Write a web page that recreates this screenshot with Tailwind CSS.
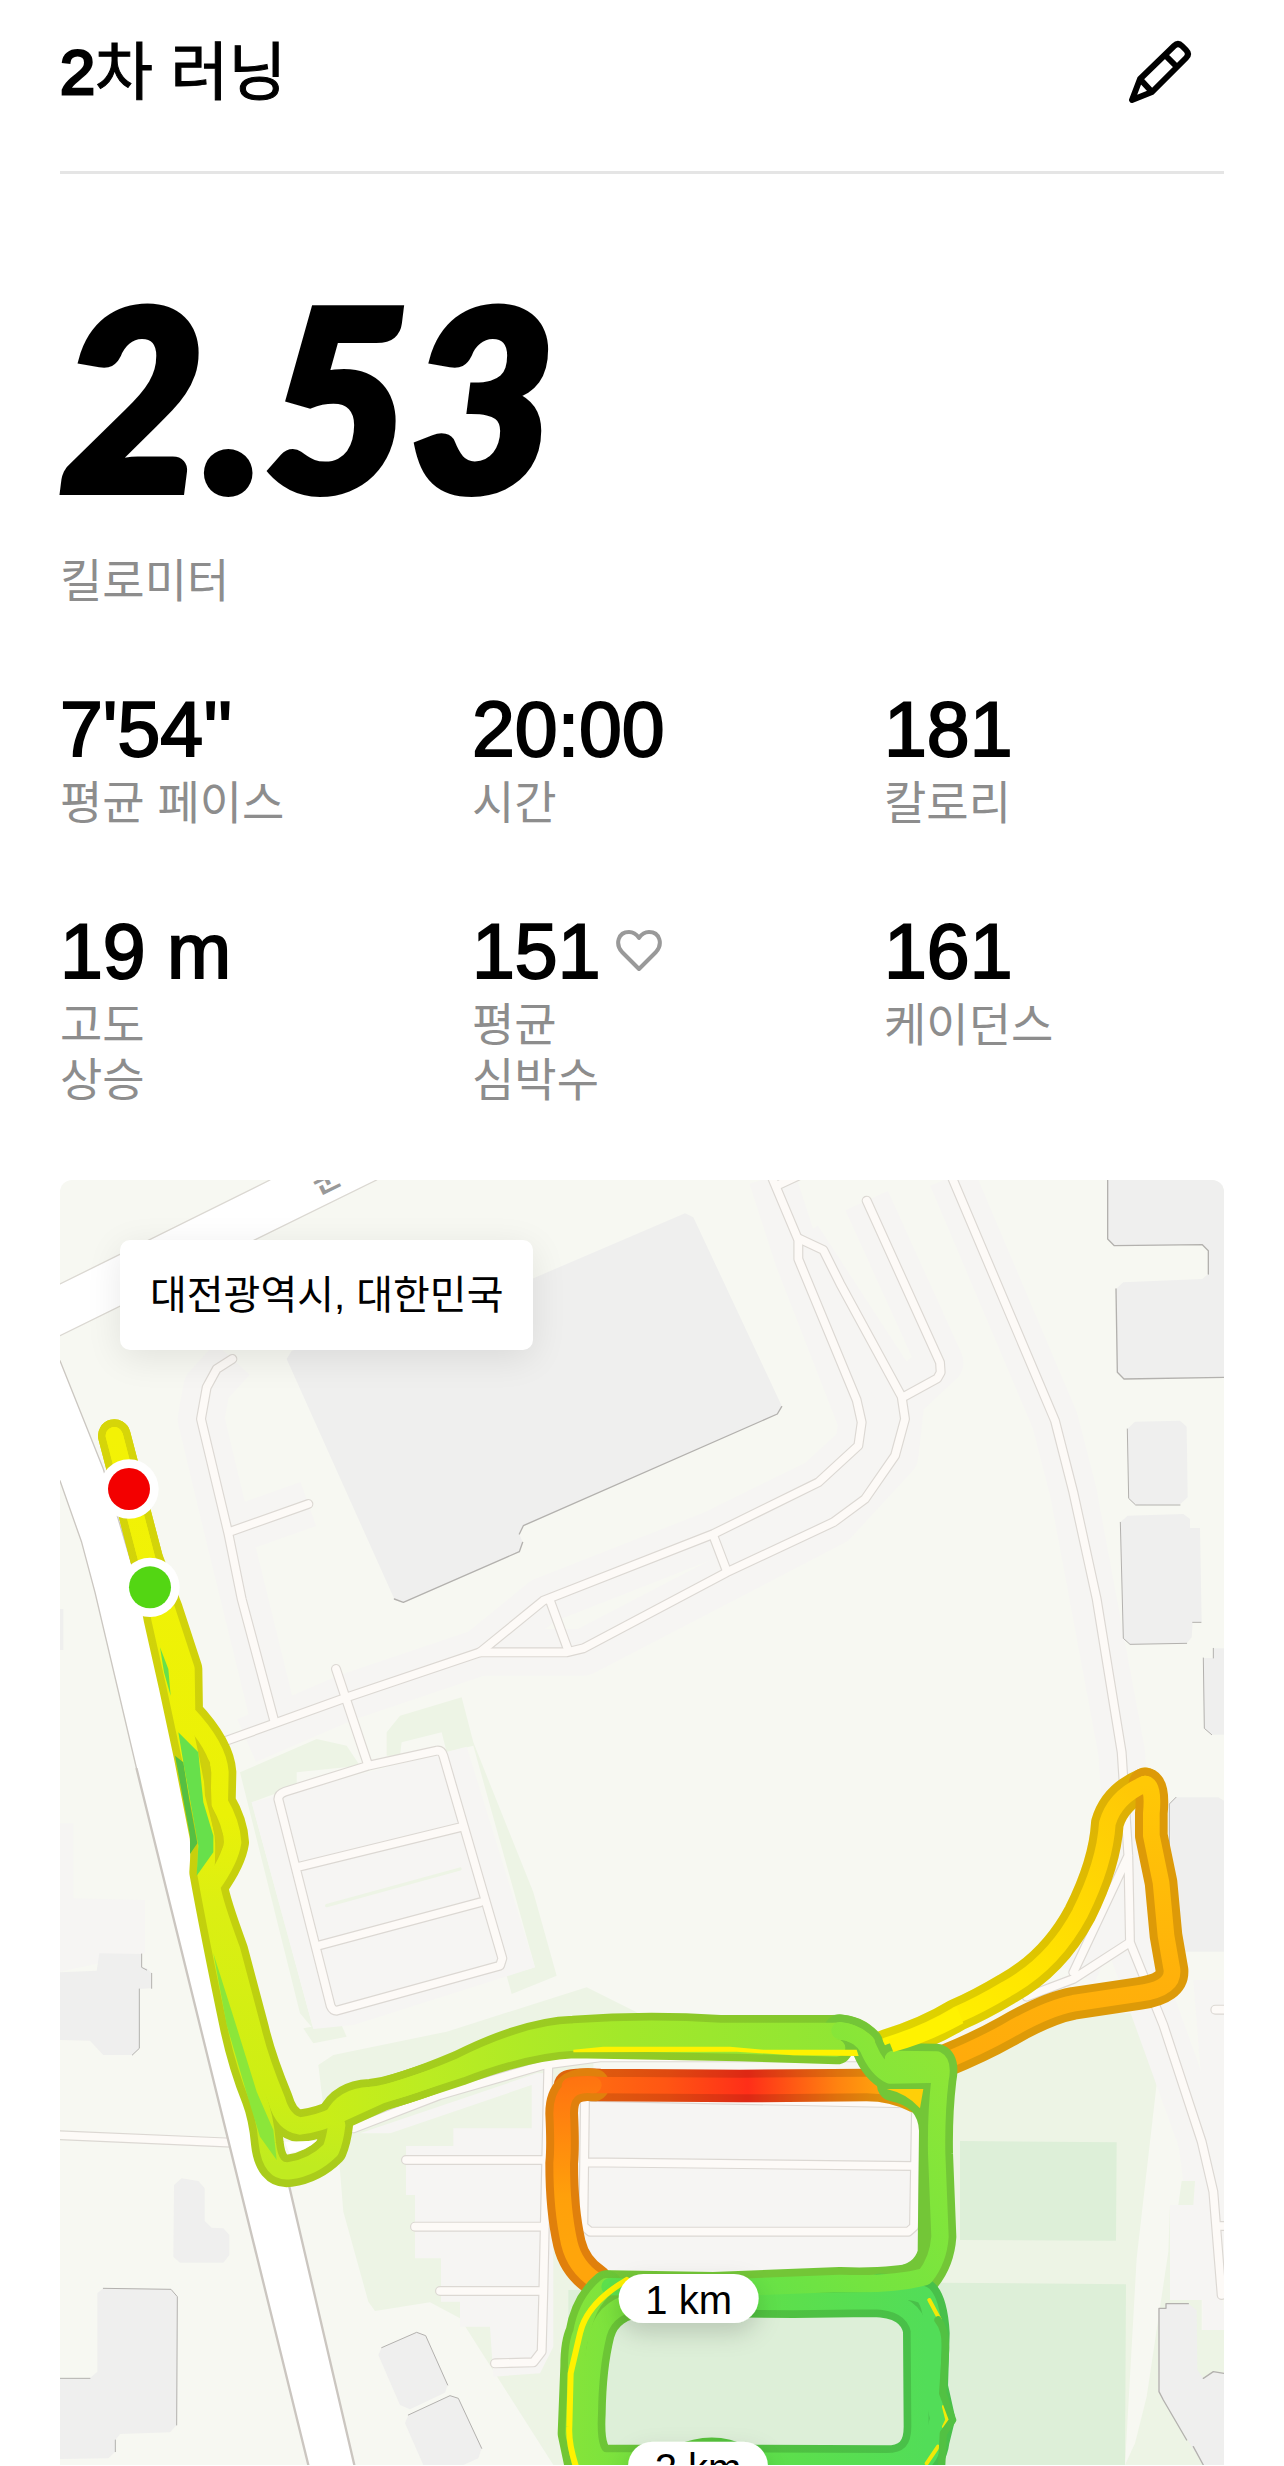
<!DOCTYPE html>
<html lang="ko">
<head>
<meta charset="utf-8">
<meta name="viewport" content="width=device-width, initial-scale=1">
<title>2차 러닝</title>
<script src="https://cdn.jsdelivr.net/npm/@tailwindcss/browser@4"></script>
</head>
<body class="bg-white text-black font-['Liberation_Sans','Noto_Sans_CJK_KR',sans-serif]">
<main class="px-[60px] overflow-hidden">
  <header class="flex items-center justify-between h-[174px] pb-7 border-b-[3px] border-[#e5e5e5]">
    <h1 class="text-[63px] leading-[96px] [-webkit-text-stroke:1px_black]"><span class="[-webkit-text-stroke:3px_black]">2</span>차 러닝</h1>
    <button type="button" aria-label="이름 편집" class="mr-8">
      <svg class="size-16" viewBox="0 0 64 64" fill="none" stroke="black" stroke-width="6" stroke-linejoin="round"><path d="M4 60 L12 39 L46 6 Q50 2 54 6 L58 10 Q62 14 58 18 L24 52 Z M37 15 L50 28 M12 39 L24 52"/></svg>
    </button>
  </header>

  <section class="pt-[112px]">
    <p class="font-['Lato',sans-serif] font-black italic text-[250px] leading-[216px] [-webkit-text-stroke:8px_black]">2.53</p>
    <p class="mt-[52px] text-[46px] leading-[55px] text-[#8d8d8d]">킬로미터</p>
  </section>

  <dl class="mt-[78px] grid grid-cols-[412px_412px_1fr] gap-y-[78px] text-[46px] leading-[55px] text-[#8d8d8d]">
    <div class="flex flex-col-reverse justify-end gap-[5px]"><dt>평균 페이스</dt><dd class="text-[77px] leading-[84px] text-black [-webkit-text-stroke:2px_black]">7'54''</dd></div>
    <div class="flex flex-col-reverse justify-end gap-[5px]"><dt>시간</dt><dd class="text-[77px] leading-[84px] text-black [-webkit-text-stroke:2px_black]">20:00</dd></div>
    <div class="flex flex-col-reverse justify-end gap-[5px]"><dt>칼로리</dt><dd class="text-[77px] leading-[84px] text-black [-webkit-text-stroke:2px_black]">181</dd></div>
    <div class="flex flex-col-reverse justify-end gap-[5px]"><dt>고도<br>상승</dt><dd class="text-[77px] leading-[84px] text-black [-webkit-text-stroke:2px_black]">19 m</dd></div>
    <div class="flex flex-col-reverse justify-end gap-[5px]"><dt>평균<br>심박수</dt><dd class="flex items-center gap-4 text-[77px] leading-[84px] text-black [-webkit-text-stroke:2px_black]">151
      <svg class="w-[46px] h-[44px]" viewBox="0 0 46 44" fill="none" stroke="#999" stroke-width="4" stroke-linejoin="round" aria-hidden="true"><path d="M23 40 L6 23 C-1 15 2 3 13 3 C18 3 21 6 23 9 C25 6 28 3 33 3 C44 3 47 15 40 23 Z"/></svg></dd></div>
    <div class="flex flex-col-reverse justify-end gap-[5px]"><dt>케이던스</dt><dd class="text-[77px] leading-[84px] text-black [-webkit-text-stroke:2px_black]">161</dd></div>
  </dl>

  <section aria-label="경로 지도" class="relative mt-[72px] overflow-hidden rounded-t-xl bg-[#f7f8f2]">
    <p class="absolute left-[60px] top-[60px] rounded-[10px] bg-white px-[30px] text-[40px] leading-[110px] shadow-[0_8px_36px_rgba(0,0,0,0.09)]">대전광역시, 대한민국</p>
    <svg class="block w-full h-auto" viewBox="0 0 3492 3855" fill="none" stroke-linecap="round" stroke-linejoin="round">
      <defs>
        <linearGradient id="west" gradientUnits="userSpaceOnUse" x1="0" y1="767" x2="0" y2="2960"><stop offset="0" stop-color="#f3f205"/><stop offset=".52" stop-color="#eaf107"/><stop offset=".64" stop-color="#dcef12"/><stop offset=".9" stop-color="#cdee14"/><stop offset="1" stop-color="#c0eb20"/></linearGradient>
        <linearGradient id="west-edge" gradientUnits="userSpaceOnUse" x1="0" y1="767" x2="0" y2="2960"><stop offset="0" stop-color="#d6d509"/><stop offset=".5" stop-color="#ccd00b"/><stop offset=".75" stop-color="#bed00f"/><stop offset="1" stop-color="#aacc1b"/></linearGradient>
        <linearGradient id="mid" gradientUnits="userSpaceOnUse" x1="700" y1="0" x2="2700" y2="0"><stop offset="0" stop-color="#cdee14"/><stop offset=".2" stop-color="#bbec22"/><stop offset=".5" stop-color="#a2e82a"/><stop offset="1" stop-color="#86e43a"/></linearGradient>
        <linearGradient id="mid-edge" gradientUnits="userSpaceOnUse" x1="700" y1="0" x2="2700" y2="0"><stop offset="0" stop-color="#b0cf18"/><stop offset=".4" stop-color="#99cb22"/><stop offset="1" stop-color="#74c634"/></linearGradient>
        <linearGradient id="up" gradientUnits="userSpaceOnUse" x1="2500" y1="2580" x2="3200" y2="1820"><stop offset="0" stop-color="#fff500"/><stop offset=".4" stop-color="#ffe600"/><stop offset="1" stop-color="#ffc806"/></linearGradient>
        <linearGradient id="down" gradientUnits="userSpaceOnUse" x1="0" y1="1812" x2="0" y2="2640"><stop offset="0" stop-color="#ffc806"/><stop offset=".7" stop-color="#ffb10a"/><stop offset="1" stop-color="#ffab0b"/></linearGradient>
        <linearGradient id="red" gradientUnits="userSpaceOnUse" x1="1505" y1="0" x2="2540" y2="0"><stop offset="0" stop-color="#ff7410"/><stop offset=".3" stop-color="#ff5613"/><stop offset=".54" stop-color="#ff2e18"/><stop offset=".8" stop-color="#ff8310"/><stop offset="1" stop-color="#ffb50a"/></linearGradient>
        <linearGradient id="orange" gradientUnits="userSpaceOnUse" x1="0" y1="2700" x2="0" y2="3200"><stop offset="0" stop-color="#ff7410"/><stop offset=".7" stop-color="#ffa00b"/><stop offset="1" stop-color="#ffa50b"/></linearGradient>
        <linearGradient id="loop" gradientUnits="userSpaceOnUse" x1="1550" y1="0" x2="2600" y2="0"><stop offset="0" stop-color="#84e43a"/><stop offset=".45" stop-color="#60e048"/><stop offset="1" stop-color="#52dd58"/></linearGradient>
        <linearGradient id="loop-edge" gradientUnits="userSpaceOnUse" x1="1550" y1="0" x2="2600" y2="0"><stop offset="0" stop-color="#72c634"/><stop offset=".45" stop-color="#52c13e"/><stop offset="1" stop-color="#48c04a"/></linearGradient>
        <linearGradient id="east" gradientUnits="userSpaceOnUse" x1="2660" y1="2650" x2="1900" y2="3400"><stop offset="0" stop-color="#8ee636"/><stop offset=".6" stop-color="#74e440"/><stop offset="1" stop-color="#5ce04c"/></linearGradient>
        <filter id="pill" x="-40%" y="-40%" width="180%" height="220%"><feDropShadow dx="0" dy="30" stdDeviation="36" flood-opacity=".16"/></filter>
        <g id="streets">
          <path d="M517 537 L470 567 L440 622 L423 717 L505 1060 L545 1257 L642 1620 M745 972 L505 1057"/>
          <path d="M500 1682 L860 1552 L1260 1417 L1450 1262 L1960 1062 L2275 907 L2395 797 L2405 727 L2390 660 L2215 237 L2215 180 L2135 -10"/>
          <path d="M1260 1417 H1520 L1570 1405 L2000 1177 L2320 1027 L2415 957 L2505 827 L2535 717 L2525 650 L2340 310 L2290 210 L2215 175 M2150 17 L2230 -20"/>
          <path d="M1470 1262 L1525 1412 M1960 1067 L2000 1172 M2420 62 L2640 547 L2642 577 L2632 595 L2528 652"/>
          <path d="M2675 -10 L2985 722 L3040 937 L3110 1257 L3185 1717 L3205 2027 L3210 2287 L3310 2535 L3425 2885 L3460 3035 L3485 3345 M3210 2287 L3040 2397 L2900 2450 M3205 2027 L3040 2377 M3466 2489 H3520 M3470 3138 H3520"/>
          <path d="M828 1467 L925 1757 M655 1857 Q655 1842 675 1835 L925 1757 L1130 1712 Q1145 1710 1150 1727 L1327 2335 L1320 2357 L830 2492 Q818 2492 812 2478 Z M710 2062 L1200 1942 M775 2297 L1260 2167"/>
          <path d="M-20 2865 L515 2888"/>
          <path d="M880 2845 L1140 2745 L1450 2655 L1620 2632 H2440 M1465 2655 L1450 3335 L1445 3515 L1420 3547 L1305 3550 M1038 2940 H1455 M1065 3140 H1455 M1140 3333 H1450"/>
          <path d="M1575 2750 L2540 2770 L2568 2790 L2562 3140 L2545 3155 H1590 L1570 3138 Z M1575 2947 L2560 2958"/>
        </g>
        <g id="halo">
          <path d="M517 537 L440 622 L423 717 L505 1060 L642 1620 M745 972 L505 1057"/>
          <path d="M560 1682 L860 1552 L1260 1417 L1450 1262 L1960 1062 L2275 907 L2395 797 L2405 727 L2215 237 L2135 -10"/>
          <path d="M1260 1417 H1570 L2320 1027 L2505 827 L2525 650 L2215 175 M2420 62 L2640 547 L2528 652"/>
          <path d="M2675 -10 L2985 722 L3040 937 L3185 1717 L3205 2027 L3210 2287 L3425 2885 L3485 3345 M3205 2027 L3040 2377"/>
        </g>
        <path id="t-west1" d="M163 767 L260 1137 Q285 1230 300 1317 L345 1517 L390 1727 L438 1970 Q442 2010 437 2077 Q470 2260 530 2547 Q555 2660 592 2750 Q615 2810 622 2890 Q632 2980 690 2972 Q760 2962 812 2910 Q825 2880 830 2835"/>
        <path id="t-west2" d="M163 767 L260 1137 L320 1290 L378 1467 L380 1600 Q475 1700 480 1777 L478 1867 Q515 1930 518 1987 Q510 2040 455 2117 Q460 2160 515 2310 L578 2547 Q600 2640 650 2760 Q670 2830 720 2838 Q780 2830 830 2805"/>
        <path id="t-mid1" d="M820 2810 Q850 2750 930 2746 Q1010 2740 1200 2660 Q1400 2560 1540 2556 Q1760 2540 1980 2554 H2320 Q2380 2548 2420 2590"/>
        <path id="t-mid2" d="M820 2810 L960 2746 L1040 2720 L1200 2668 Q1400 2592 1540 2586 L2040 2595 L2330 2604"/>
        <path id="t-up" d="M2480 2597 Q2600 2560 2690 2505 Q2760 2475 2840 2427 Q2980 2350 3060 2200 Q3135 2050 3142 1930 Q3165 1850 3255 1812"/>
        <path id="t-down" d="M3255 1812 Q3282 1815 3274 1900 L3274 1967 L3303 2107 L3318 2267 L3336 2370 Q3340 2425 3240 2440 L3040 2470 Q2960 2485 2840 2555 Q2760 2600 2650 2645"/>
        <path id="t-red" d="M2570 2750 Q2500 2715 2420 2715 L2040 2718 L1620 2715 Q1560 2712 1530 2718"/>
        <path id="t-orange" d="M1600 2715 Q1505 2705 1505 2800 Q1510 2900 1505 2950 Q1505 3090 1528 3190 Q1545 3260 1605 3300"/>
        <path id="t-east" d="M2340 2552 Q2400 2560 2425 2605 Q2450 2665 2490 2685 L2640 2682 M2500 2638 L2630 2640 Q2650 2650 2640 2700 Q2628 2800 2630 2920 L2640 3170 Q2635 3240 2595 3290 Q2500 3316 2340 3310 L1960 3325 L1650 3320"/>
        <path id="t-east2" d="M2500 2715 Q2620 2740 2626 2850 L2622 3220 Q2600 3300 2500 3310"/>
        <path id="t-loop1" d="M1640 3320 Q1580 3370 1565 3460 Q1550 3490 1550 3560 L1542 3760 L1560 3845 Q1600 3880 1700 3860 L2540 3860 Q2610 3860 2620 3780 L2636 3715 L2615 3620 L2620 3460 Q2615 3370 2590 3345 Q2560 3330 2460 3330"/>
        <path id="t-loop2" d="M1760 3360 Q1640 3370 1615 3460 Q1590 3560 1588 3700 Q1580 3845 1640 3843 L1860 3843 Q1960 3800 2040 3843 L2480 3845 Q2580 3845 2580 3740 L2578 3450 Q2560 3365 2440 3362 L2200 3365 Z"/>
      </defs>

      <!-- lawns and sports fields -->
      <g fill="#edf4e5">
        <path d="M540 1777 L770 1677 L860 1697 L900 1757 L710 1777 V1817 L575 1867 L760 2547 L720 2500 Z"/>
        <path d="M980 1727 V1657 L1020 1607 L1205 1552 L1240 1687 L1420 2137 L1490 2387 L1355 2442 L1340 2387 L1425 2362 L1240 1697 L1160 1717 L1145 1657 L1025 1687 L1020 1727 Z"/>
        <path d="M730 2545 L840 2525 L860 2570 L760 2590 Z"/>
        <path d="M775 2655 L820 2625 L1160 2555 L1580 2422 L1730 2497 L1700 2640 H1600 V3855 H1480 L1200 3415 L1110 3367 L945 3393 L925 3365 L850 3095 L830 2850 L790 2780 Z"/>
        <path d="M2560 2600 L2700 2660 L3000 2500 L3240 2500 L3300 2625 L3270 2885 L3230 3235 L3195 3855 H1500 L1520 3300 L2600 3250 Z"/>
        <path d="M3330 3075 V3360 H3425 V3450 H3492 V3855 H3195 L3225 3790 L3260 3650 L3325 3215 Z"/>
      </g>
      <path fill="#ddefd8" d="M2700 2883 L3170 2887 L3168 3182 L2700 3180 Z M1525 3330 L2640 3308 L3198 3313 L3195 3855 H1525 Z"/>

      <!-- paved ground -->
      <use href="#halo" stroke="#f6f5f3" stroke-width="140" stroke-linecap="butt"/>
      <g fill="#f6f5f3">
        <path d="M575 1867 L1220 1700 L1425 2362 L880 2535 L760 2547 Z"/>
        <path d="M900 2860 L1430 2680 H1480 V3500 L1440 3580 L1300 3590 L1290 3440 H1200 V3365 H1143 V3235 H1065 V3045 H1038 V2860 Z"/>
        <path d="M1550 2730 H2600 V3270 H1550 Z M0 1930 H40 V2155 L255 2160 V2320 L0 2375 Z"/>
        <path d="M3330 3075 H3450 L3492 3400 V3450 H3428 V3360 H3330 Z M3400 2400 H3492 V3138 L3440 2900 Z"/>
      </g>
      <path fill="#edf4e5" d="M960 2870 L1415 2715 V2845 H1180 V2898 H960 Z M3365 3003 H3405 L3400 3075 H3355 Z"/>
      <path d="M800 2177 L1200 2067" stroke="#edf4e5" stroke-width="10"/>

      <!-- buildings -->
      <g fill="#efefee">
        <path d="M1875 100 L1900 112 L2165 677 L2152 702 L1390 1037 L1378 1062 L1388 1087 L1378 1115 L1030 1267 L1003 1257 L680 537 L695 512 L1415 297 Z"/>
        <path d="M3143 0 V177 L3163 197 L3427 194 L3445 212 V282 L3427 297 L3190 307 L3168 327 L3172 577 L3192 597 L3492 592 V0 Z"/>
        <path d="M3202 747 L3225 725 L3360 722 L3380 740 L3383 952 L3360 973 L3227 975 L3206 955 Z"/>
        <path d="M3181 1027 L3203 1007 L3370 1002 L3390 1017 V1044 H3420 L3425 1327 H3398 L3395 1372 L3380 1390 L3210 1393 L3190 1375 Z"/>
        <path d="M3430 1434 H3460 V1405 H3492 V1664 H3455 L3433 1645 Z M3328 1872 L3348 1852 H3475 L3492 1862 V2315 H3340 Z"/>
        <path d="M0 1287 H10 V1410 H0 Z M0 2377 L110 2372 L118 2320 L245 2322 V2362 L260 2365 L275 2380 V2425 L238 2427 V2605 L217 2625 H130 L90 2582 L0 2580 Z"/>
        <path d="M342 3015 L365 2995 L415 3003 L434 3025 V3123 L455 3143 L490 3145 L508 3165 V3225 L490 3248 H360 L340 3230 Z"/>
        <path d="M130 3325 L333 3328 L352 3350 L350 3735 L330 3757 L180 3762 L166 3780 V3815 L145 3835 L0 3837 V3595 H90 L112 3575 V3340 Z"/>
        <path d="M955 3525 L965 3503 L1070 3457 L1097 3467 L1163 3615 L1155 3638 L1050 3688 L1020 3675 Z M1035 3730 L1045 3705 L1170 3647 L1195 3655 L1265 3805 L1255 3835 L1210 3855 H1090 Z"/>
        <path d="M3295 3385 H3318 V3371 H3385 L3410 3390 L3412 3570 L3430 3595 L3460 3575 L3492 3580 V3855 H3430 L3398 3805 L3295 3635 Z"/>
      </g>
      <g stroke="#b3b1ae" stroke-width="4">
        <path d="M2165 680 L2152 702 L1390 1037 L1378 1062 M1388 1087 L1378 1115 L1030 1267 L1003 1257"/>
        <path d="M3143 0 V177 L3163 197 L3427 194 L3445 212 V282 M3168 327 L3172 577 L3192 597 L3492 592"/>
        <path d="M3202 747 L3206 955 L3227 975 H3360 M3181 1027 L3190 1375 L3210 1393 L3380 1390 M3398 1327 H3423 M3460 1405 V1434 M3430 1434 L3433 1645 L3455 1664 M3328 2050 V1872 L3348 1852" stroke-width="3"/>
        <path d="M245 2322 V2362 L260 2370 M275 2380 V2425 M238 2427 V2605 L217 2625 M130 3325 L333 3328 L352 3350 L350 3735 M166 3780 V3815 M0 3595 H90 M965 3503 L1070 3457 L1097 3467 L1163 3615 M1045 3705 L1170 3647 L1195 3655 L1265 3805" stroke-width="3"/>
        <path d="M3385 3371 H3318 V3385 H3297 V3635 L3310 3660 L3380 3780 M3400 3800 L3430 3855 M3430 3595 L3460 3575 L3492 3580"/>
      </g>

      <!-- streets -->
      <use href="#streets" stroke="#dcd8d3" stroke-width="30"/>
      <use href="#streets" stroke="#fdfaf7" stroke-width="23"/>
      <path fill="#fff" d="M0 312 L630 0 H950 L0 467 Z M0 902 L65 1087 L105 1237 L230 1767 L745 3855 H883 L688 3020 L215 1152 L130 867 L0 542 Z"/>
      <path stroke="#dbd8d2" stroke-width="4" d="M0 312 L630 0 M950 0 L0 467"/>
      <path stroke="#cbc7c1" stroke-width="4" d="M0 542 L130 867 L215 1152 L688 3020 M0 902 L65 1087 L105 1237 L230 1767"/>
      <path stroke="#cbc6c0" stroke-width="7" d="M230 1767 L745 3855 M688 3020 L883 3855"/>
      <text x="0" y="0" transform="translate(775 44) rotate(-26)" font-size="92" font-weight="700" fill="#999" stroke="none">군</text>

      <!-- run track: casing first, coloured core above it -->
      <g stroke-width="98">
        <use href="#t-up" stroke="url(#up)"/><use href="#t-up" stroke="#000" stroke-opacity=".13"/>
        <use href="#t-down" stroke="#dd9a08"/>
        <use href="#t-up" stroke="url(#up)" stroke-width="50"/>
        <use href="#t-down" stroke="url(#down)" stroke-width="50"/>
      </g>
      <g stroke-width="98">
        <use href="#t-red" stroke="url(#red)"/><use href="#t-red" stroke="#000" stroke-opacity=".13"/>
        <use href="#t-orange" stroke="#e0800c"/>
        <use href="#t-red" stroke="url(#red)" stroke-width="50"/>
        <use href="#t-orange" stroke="url(#orange)" stroke-width="50"/>
      </g>
      <g stroke-width="98">
        <use href="#t-west1" stroke="url(#west-edge)"/><use href="#t-west2" stroke="url(#west-edge)"/>
        <use href="#t-mid2" stroke="url(#mid-edge)"/><use href="#t-mid1" stroke="url(#mid-edge)"/>
        <use href="#t-east" stroke="#73c637"/><use href="#t-east2" stroke="#73c637"/>
        <use href="#t-loop1" stroke="url(#loop-edge)"/><use href="#t-loop2" stroke="url(#loop-edge)"/>
      </g>
      <g stroke-width="52">
        <use href="#t-west1" stroke="url(#west)"/><use href="#t-west2" stroke="url(#west)"/>
        <use href="#t-mid2" stroke="url(#mid)"/><use href="#t-mid1" stroke="url(#mid)"/>
        <use href="#t-loop1" stroke="url(#loop)"/><use href="#t-loop2" stroke="url(#loop)"/>
        <use href="#t-east" stroke="url(#east)"/>
      </g>
      <path fill="#ffcf08" d="M2480 2727 H2590 L2580 2785 Q2540 2740 2480 2727 Z"/>
      <path fill="#fff200" d="M2485 2578 L2560 2550 L2690 2480 L2710 2530 Q2600 2590 2500 2616 Z M1540 2609 L1630 2600 H2010 L2110 2609 H2390 L2396 2628 L2200 2626 L2030 2615 L1540 2617 Z"/>
      <path stroke="#fff200" stroke-width="18" d="M1700 3300 Q1580 3370 1560 3460 L1532 3580 L1528 3740 Q1525 3790 1548 3860"/>
      <path stroke="#f2e808" stroke-width="12" d="M2608 3360 L2640 3420 M2652 3680 L2662 3720 L2652 3740 M2634 3800 L2600 3850"/>
      <path stroke="#52c143" stroke-width="22" d="M2634 3420 Q2660 3450 2656 3520 L2648 3640 L2678 3720 L2650 3760 L2645 3855"/>
      <g>
        <path fill="#67e04b" d="M355 1657 L415 1717 L430 1867 L460 1967 V2017 L410 2087 L415 1997 L370 1747 Z M300 1402 L325 1467 L332 1547 L312 1477 Z"/>
        <path fill="#55bf42" d="M345 1727 L370 1747 L388 1860 L412 1990 L390 2022 V1967 Z"/>
        <path fill="#cfd00c" d="M415 1692 L450 1747 L455 1877 L490 1967 V1997 L465 2047 L470 1987 L435 1847 L430 1767 Z"/>
        <path fill="#8be63a" d="M460 2320 L528 2535 L590 2735 L640 2850 L650 2940 L600 2870 L560 2740 L500 2535 Z"/>
      </g>
      <path fill="#fff" d="M675 2885 L770 2882 Q740 2910 688 2920 Z"/>

      <!-- start, finish and distance markers -->
      <circle cx="270" cy="1222" r="89" fill="#fff"/><circle cx="270" cy="1222" r="63" fill="#53d613"/>
      <circle cx="207" cy="927" r="89" fill="#fff"/><circle cx="207" cy="927" r="63" fill="#f30000"/>
      <g fill="#fff" filter="url(#pill)">
        <rect x="1676" y="3282" width="420" height="147" rx="74"/>
        <rect x="1704" y="3785" width="420" height="147" rx="74"/>
      </g>
      <g fill="#000" font-size="120" text-anchor="middle">
        <text x="1886" y="3403">1 km</text>
        <text x="1914" y="3906">2 km</text>
      </g>
    </svg>
  </section>
</main>
</body>
</html>
